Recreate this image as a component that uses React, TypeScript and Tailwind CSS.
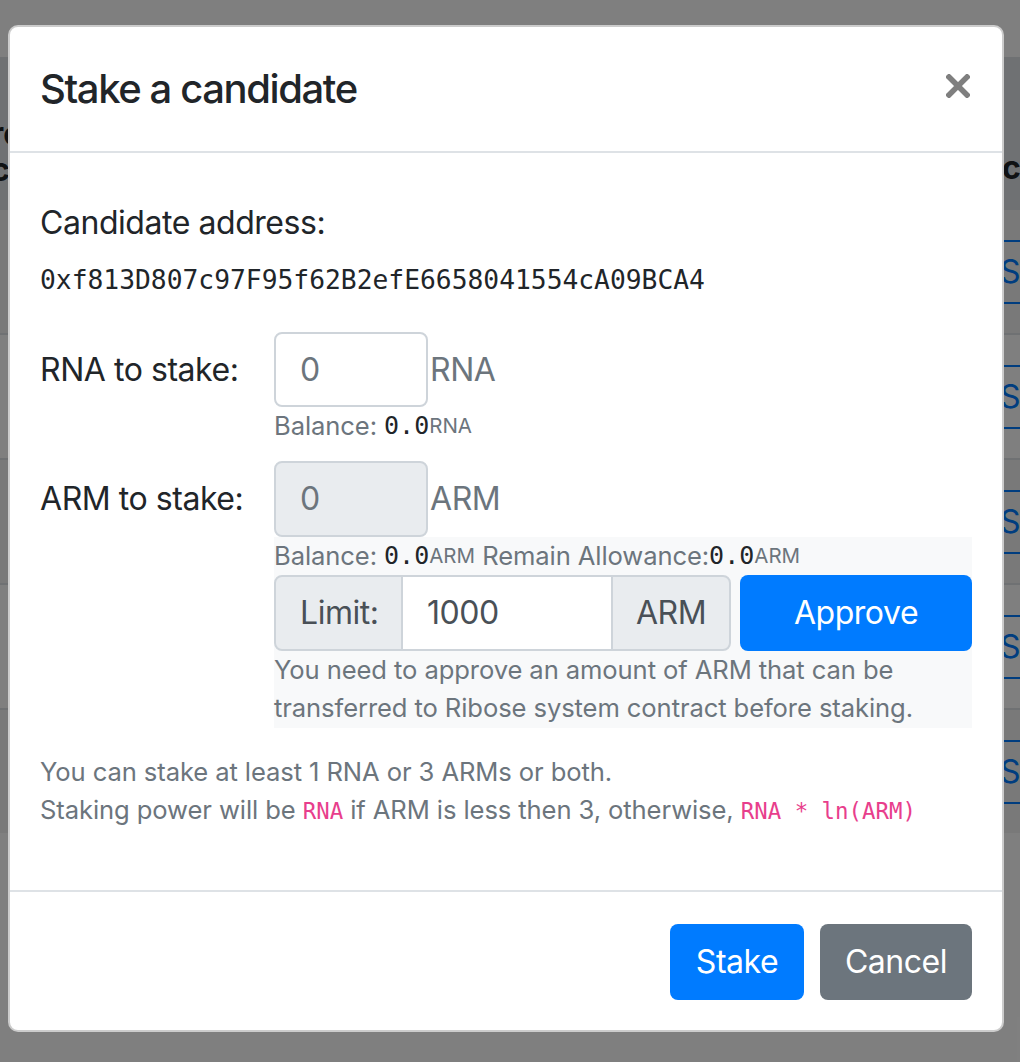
import React from 'react';

const sans = { fontFamily: 'Inter, "Liberation Sans", sans-serif' };

const rows = [0, 1, 2, 3, 4];

const App: React.FC = () => {
  return (
    <div className="relative w-[1020px] h-[1062px] overflow-hidden bg-white" style={sans}>
      {/* Page behind the modal */}
      <div className="pt-[57px]">
        <div className="h-[151px] bg-[#dee2e6] border-b-2 border-[#dee2e6] flex justify-between items-center text-[32px] font-bold text-[#212529] leading-[36px]">
          <div className="-ml-[9px] pt-[40px]">
            <div>re</div>
            <div>c</div>
          </div>
          <div className="pt-[72px] pr-[2px] w-[18px]">c</div>
        </div>
        {rows.map((r) => (
          <div
            key={r}
            className={`h-[125px] border-t-2 border-[#dee2e6] flex items-center justify-end ${
              r % 2 === 0 ? 'bg-[#f2f2f2]' : 'bg-white'
            }`}
          >
            <div className="w-[30px] h-[64px] border-2 border-r-0 border-[#007bff] rounded-l-[8px] text-[#007bff] text-[32px] flex items-center pl-[8px]">
              S
            </div>
          </div>
        ))}
      </div>

      {/* Overlay + modal */}
      <div className="absolute inset-0 bg-black/50 pt-[25px] pl-[8px]">
        <div className="w-[996px] h-[1007px] bg-white border-2 border-black/20 rounded-[10px] flex flex-col text-[#212529] tracking-[-0.45px]">
          {/* Header */}
          <div className="h-[124px] px-[30px] flex items-center justify-between border-b-2 border-[#dee2e6] box-content">
            <h5 className="text-[40px] font-medium tracking-[-1.4px]">Stake a candidate</h5>
            <button className="w-[40px] h-[40px] flex items-center justify-center -mr-[6px] -mt-[6px]">
              <svg width="24" height="24" viewBox="0 0 24 24">
                <path d="M3 3 L21 21 M21 3 L3 21" stroke="#7f7f7f" strokeWidth="5.5" strokeLinecap="square" />
              </svg>
            </button>
          </div>

          {/* Body */}
          <div className="flex-1 px-[30px] pt-[32px]">
            <div className="h-[76px] flex items-center text-[32px]">Candidate address:</div>
            <div className="h-[40px] flex items-center font-['DejaVu_Sans_Mono',monospace] text-[26.3px] tracking-normal">
              0xf813D807c97F95f62B2efE6658041554cA09BCA4
            </div>

            {/* RNA */}
            <div className="mt-[31px] flex">
              <div className="w-[234px] h-[75px] flex items-center text-[32px]">RNA to stake:</div>
              <div className="flex-1">
                <div className="flex items-center h-[75px]">
                  <div className="w-[154px] h-[75px] border-2 border-[#ced4da] rounded-[8px] px-[24px] flex items-center text-[32px] text-[#6c757d]">
                    0
                  </div>
                  <span className="ml-[2px] text-[32px] text-[#6c757d]">RNA</span>
                </div>
                <div className="h-[38px] flex items-center text-[25.6px] text-[#6c757d] tracking-[-0.1px]">
                  Balance:&nbsp;
                  <span className="font-['DejaVu_Sans_Mono',monospace] text-[#212529] text-[25px] tracking-normal">0.0</span>
                  <span className="text-[20.5px] tracking-normal">RNA</span>
                </div>
              </div>
            </div>

            {/* ARM */}
            <div className="mt-[16px] flex">
              <div className="w-[234px] h-[76px] flex items-center text-[32px]">ARM to stake:</div>
              <div className="flex-1">
                <div className="flex items-center h-[76px]">
                  <div className="w-[154px] h-[76px] border-2 border-[#ced4da] bg-[#e9ecef] rounded-[8px] px-[24px] flex items-center text-[32px] text-[#6c757d]">
                    0
                  </div>
                  <span className="ml-[2px] text-[32px] text-[#6c757d]">ARM</span>
                </div>
                <div className="bg-[#f8f9fa] pb-[1px]">
                  <div className="h-[38px] flex items-center text-[25.6px] text-[#6c757d] whitespace-nowrap tracking-[-0.1px]">
                    Balance:&nbsp;
                    <span className="font-['DejaVu_Sans_Mono',monospace] text-[#212529] text-[25px] tracking-normal">0.0</span>
                    <span className="text-[20.5px] tracking-normal">ARM</span>
                    &nbsp;Remain Allowance:
                    <span className="font-['DejaVu_Sans_Mono',monospace] text-[#212529] text-[25px] tracking-normal">0.0</span>
                    <span className="text-[20.5px] tracking-normal">ARM</span>
                  </div>
                  <div className="flex h-[76px] gap-[9px]">
                    <div className="w-[457px] flex text-[32px] text-[#495057]">
                      <div className="w-[129px] bg-[#e9ecef] border-2 border-[#ced4da] rounded-l-[8px] px-[24px] flex items-center">
                        Limit:
                      </div>
                      <div className="w-[208px] bg-white border-y-2 border-[#ced4da] px-[24px] flex items-center">
                        1000
                      </div>
                      <div className="w-[120px] bg-[#e9ecef] border-2 border-[#ced4da] rounded-r-[8px] flex items-center justify-center">
                        ARM
                      </div>
                    </div>
                    <button className="flex-1 bg-[#007bff] text-white text-[32px] rounded-[8px] flex items-center justify-center">
                      Approve
                    </button>
                  </div>
                  <div className="text-[25.6px] leading-[38px] text-[#6c757d] tracking-[-0.1px]">
                    You need to approve an amount of ARM that can be
                    <br />
                    transferred to Ribose system contract before staking.
                  </div>
                </div>
              </div>
            </div>

            {/* Notes */}
            <div className="mt-[25px] text-[25.6px] leading-[38px] text-[#6c757d] tracking-[-0.1px]">
              <div>You can stake at least 1 RNA or 3 ARMs or both.</div>
              <div>
                Staking power will be{' '}
                <code className="font-['DejaVu_Sans_Mono',monospace] text-[22.4px] text-[#e83e8c] tracking-normal">RNA</code> if ARM is
                less then 3, otherwise,{' '}
                <code className="font-['DejaVu_Sans_Mono',monospace] text-[22.4px] text-[#e83e8c] tracking-normal">RNA * ln(ARM)</code>
              </div>
            </div>
          </div>

          {/* Footer */}
          <div className="border-t-2 border-[#dee2e6] px-[30px] pt-[32px] pb-[30px] flex justify-end gap-[16px]">
            <button className="w-[134px] h-[76px] bg-[#007bff] text-white text-[32px] rounded-[8px]">Stake</button>
            <button className="w-[152px] h-[76px] bg-[#6c757d] text-white text-[32px] rounded-[8px]">Cancel</button>
          </div>
        </div>
      </div>
    </div>
  );
};

export default App;
